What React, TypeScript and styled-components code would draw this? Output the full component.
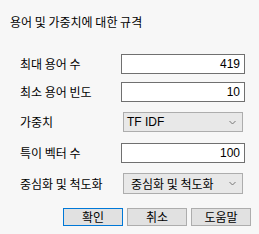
import React from 'react'
import styled, { createGlobalStyle } from 'styled-components'

const GlobalStyle = createGlobalStyle`
  html, body {
    margin: 0;
    padding: 0;
    background: #f7f7f7;
  }
  body {
    font-family: 'Noto Sans CJK KR', 'Liberation Sans', sans-serif;
    font-size: 12px;
    color: #000;
  }
`

const Dialog = styled.div`
  width: 259px;
  height: 234px;
  box-sizing: border-box;
  padding: 14px 0 0 10px;
  background: #f7f7f7;
`

const Title = styled.div`
  height: 16px;
  line-height: 16px;
  font-size: 12px;
`

const Form = styled.div`
  display: flex;
  flex-direction: column;
  padding-left: 10px;
`

const Row = styled.div<{ $top: number; $h?: number }>`
  display: grid;
  grid-template-columns: 101px 1fr;
  align-items: center;
  margin-top: ${({ $top }) => $top}px;
  height: ${({ $h }) => $h ?? 20}px;
`

const Label = styled.span`
  font-size: 12px;
  line-height: 14px;
  white-space: nowrap;
`

const NumberBox = styled.div`
  box-sizing: border-box;
  width: 124px;
  height: 20px;
  border: 1px solid #707070;
  background: #fff;
  padding: 0 4px;
  display: flex;
  align-items: center;
  justify-content: flex-end;
  font-family: 'Liberation Sans', Arial, sans-serif;
  font-size: 12px;
`

const Select = styled.div<{ $inset: number; $h?: number }>`
  box-sizing: border-box;
  width: 120px;
  height: ${({ $h }) => $h ?? 20}px;
  margin-left: 2px;
  border: 1px solid #adadad;
  background: #e8e8e8;
  padding: 0 6px 0 ${({ $inset }) => $inset}px;
  display: flex;
  align-items: center;
  justify-content: space-between;
  font-size: 12px;
  white-space: nowrap;
`

const SelectText = styled.span<{ $latin?: boolean }>`
  font-family: ${({ $latin }) =>
    $latin ? "'Liberation Sans', Arial, sans-serif" : "'Noto Sans CJK KR', sans-serif"};
`

const Buttons = styled.div`
  display: flex;
  gap: 4px;
  margin-top: 14px;
  padding-left: 53px;
`

const Button = styled.button<{ $primary?: boolean }>`
  box-sizing: border-box;
  width: 60px;
  height: 18px;
  padding: 0;
  margin: 0;
  border: 1px solid ${({ $primary }) => ($primary ? '#0078d7' : '#adadad')};
  background: #e1e1e1;
  font-family: 'Noto Sans CJK KR', sans-serif;
  font-size: 12px;
  line-height: 16px;
  color: #000;
`

const Chevron = () => (
  <svg width="7" height="5" viewBox="0 0 7 5">
    <path d="M0.5 1 L3.5 4 L6.5 1" fill="none" stroke="#777" strokeWidth="1" />
  </svg>
)

export default function App() {
  return (
    <Dialog>
      <GlobalStyle />
      <Title>용어 및 가중치에 대한 규격</Title>
      <Form>
        <Row $top={24}>
          <Label>최대 용어 수</Label>
          <NumberBox>419</NumberBox>
        </Row>
        <Row $top={8}>
          <Label>최소 용어 빈도</Label>
          <NumberBox>10</NumberBox>
        </Row>
        <Row $top={10}>
          <Label>가중치</Label>
          <Select $inset={3}>
            <SelectText $latin>TF IDF</SelectText>
            <Chevron />
          </Select>
        </Row>
        <Row $top={11}>
          <Label>특이 벡터 수</Label>
          <NumberBox>100</NumberBox>
        </Row>
        <Row $top={10} $h={21}>
          <Label>중심화 및 척도화</Label>
          <Select $inset={7} $h={21}>
            <SelectText>중심화 및 척도화</SelectText>
            <Chevron />
          </Select>
        </Row>
      </Form>
      <Buttons>
        <Button $primary>확인</Button>
        <Button>취소</Button>
        <Button>도움말</Button>
      </Buttons>
    </Dialog>
  )
}
